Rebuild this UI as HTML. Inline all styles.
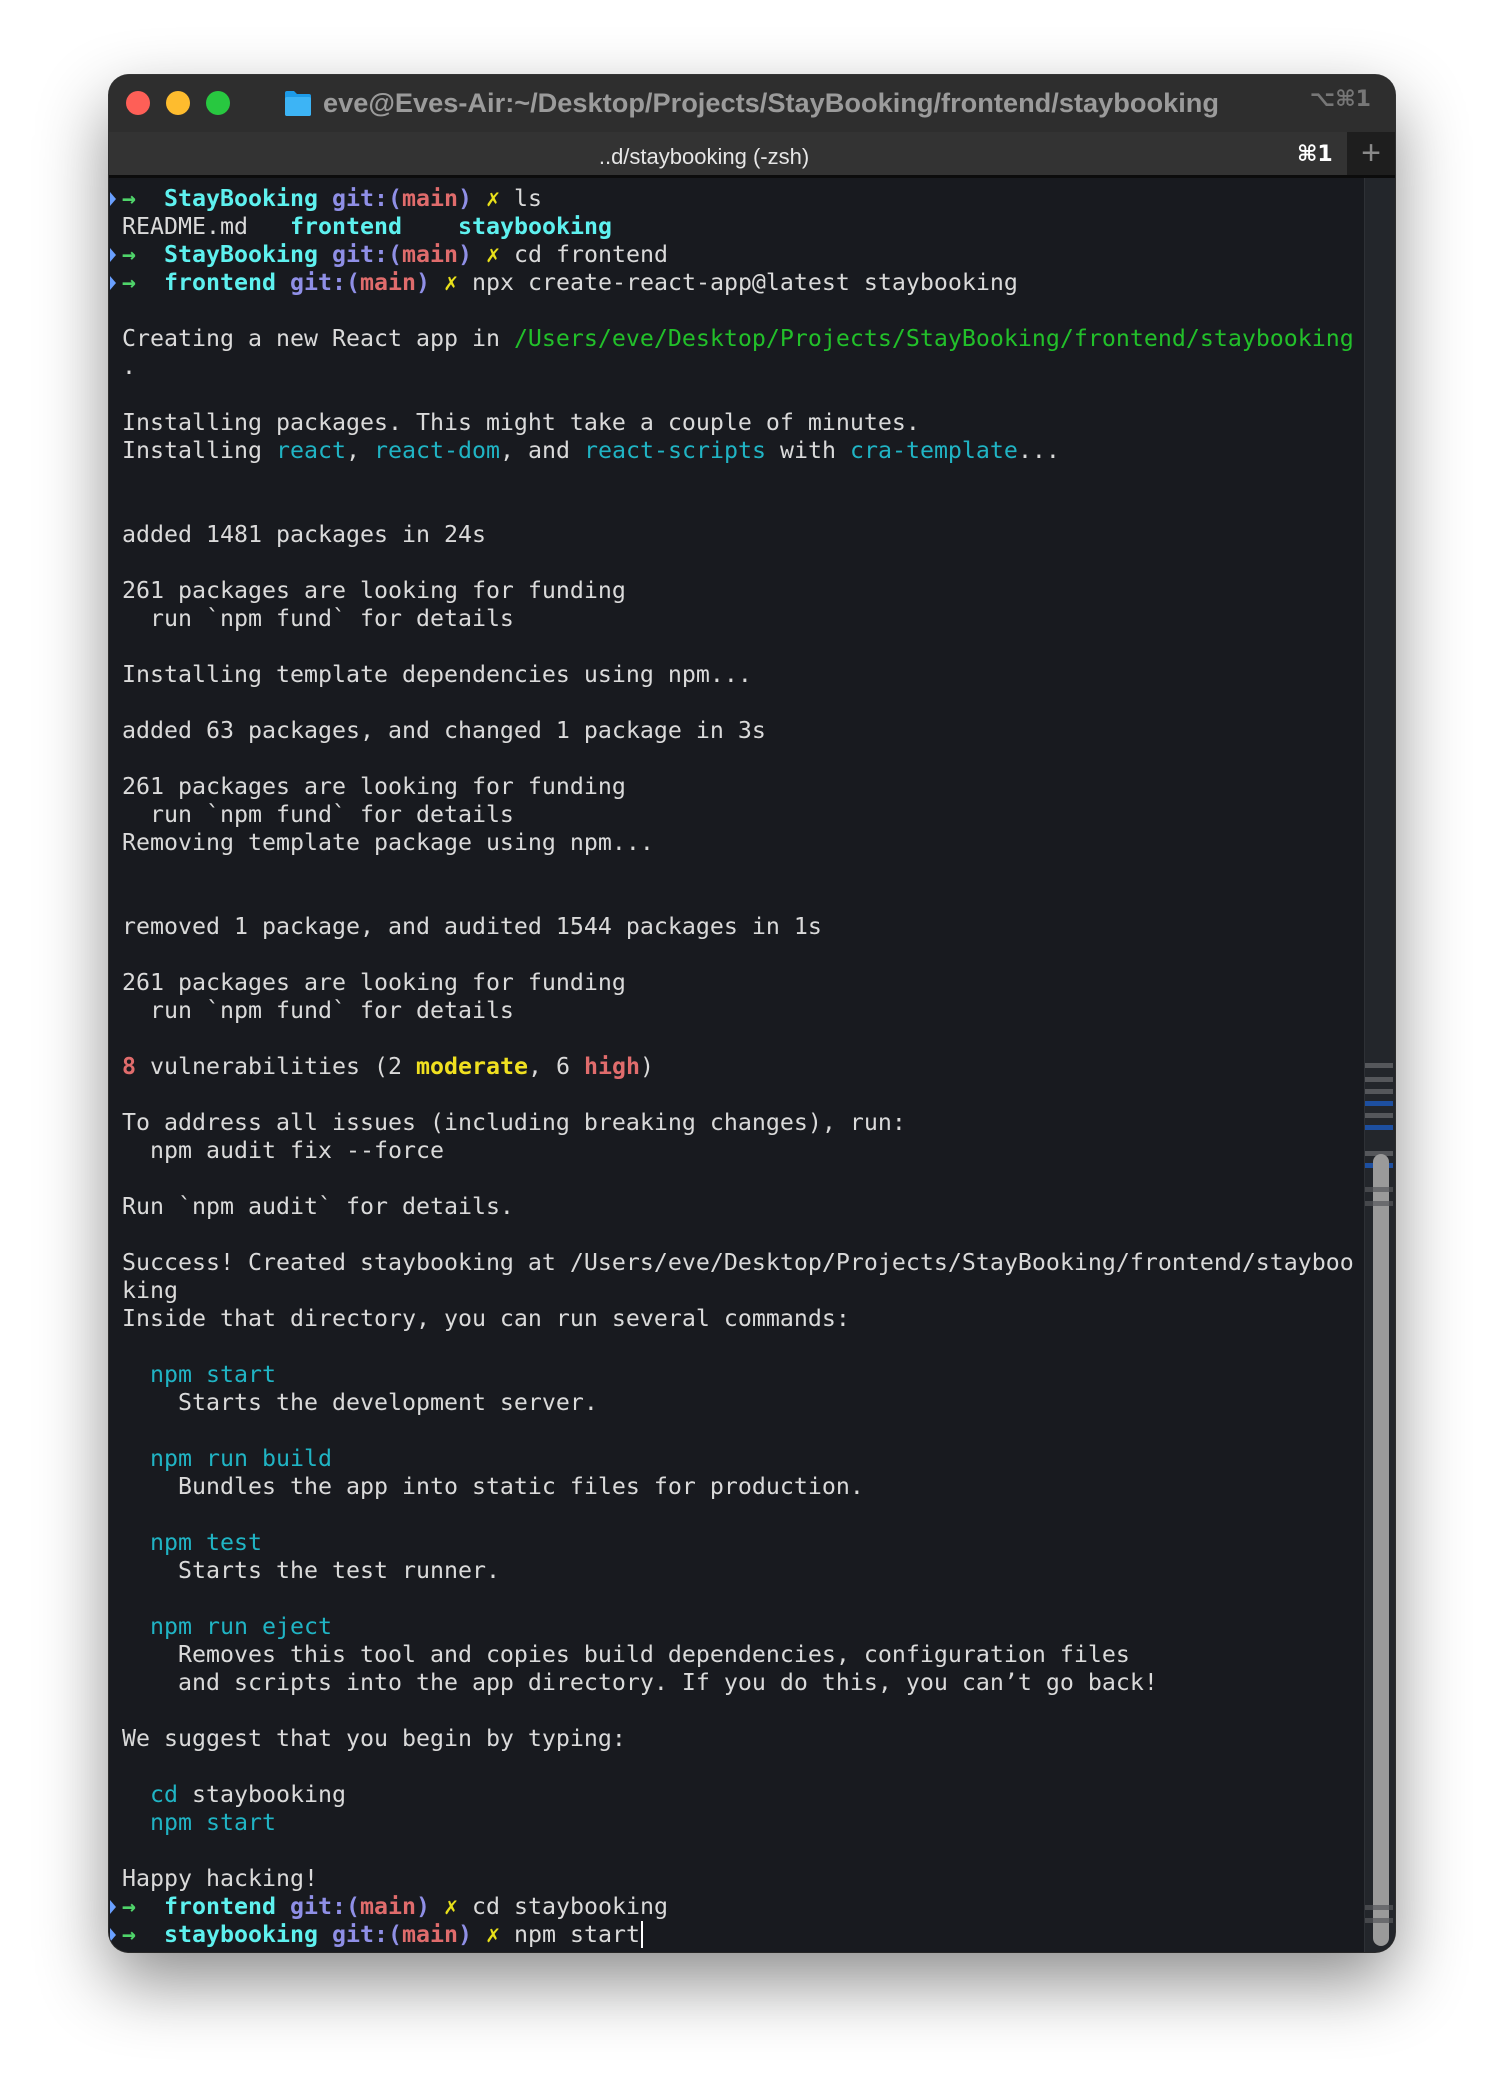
<!DOCTYPE html>
<html><head><meta charset="utf-8"><style>
html,body{margin:0;padding:0;width:1506px;height:2100px;background:#fff;overflow:hidden}
.win{position:absolute;left:109px;top:75px;width:1286px;height:1877px;border-radius:20px;background:#181a1f;box-shadow:0 30px 70px rgba(0,0,0,.45),0 0 0 1px #3a3a3a;overflow:hidden}
.title{position:absolute;left:0;top:0;width:100%;height:57px;background:#2e2e2e}
.tabs{position:absolute;left:0;top:57px;width:100%;height:46px;background:#333333;border-bottom:3px solid #0c0c0c;box-sizing:border-box}
.dot{position:absolute;top:16px;width:24px;height:24px;border-radius:50%}
.ttl{position:absolute;left:214px;top:12px;font:bold 27.2px "Liberation Sans",sans-serif;color:#9b9b9b;white-space:nowrap}
.sc{position:absolute;right:24px;top:12px;font:bold 22px "DejaVu Sans",sans-serif;color:#777}
.tabt{position:absolute;left:0;width:1190px;text-align:center;top:12px;font:22px "Liberation Sans",sans-serif;color:#e6e6e6}
.plus{position:absolute;right:0;top:0;width:48px;height:43px;background:#1e1e1e;color:#8a8a8a;font:34px "Liberation Sans",sans-serif;text-align:center;line-height:42px}
pre{position:absolute;left:13px;top:110px;margin:0;font:23.25px/28px "DejaVu Sans Mono",monospace;color:#dadada}
.c{color:#5ef1ef;font-weight:bold}.g{color:#8f8fe6;font-weight:bold}.r{color:#e06c6c;font-weight:bold}.y{color:#e8e01a}.a{color:#4fd46a;font-weight:bold}
.p{color:#22c02a}.t{color:#20b4c4}.rb{color:#e06c6c;font-weight:bold}.yb{color:#f0e020;font-weight:bold}
.sb{position:absolute;left:1255px;top:103px;width:31px;height:1774px;background:#23262b;border-left:1px solid #2e3136}
.m{position:absolute;left:0;width:28px;height:5px;background:#55575b}
.m.b{background:#1d4fa0}
.th{position:absolute;left:8px;top:976px;width:16px;height:792px;border-radius:8px;background:#9a9a9a}
.mk{position:absolute;left:1px;width:0;height:0;border-top:7px solid transparent;border-bottom:7px solid transparent;border-left:6px solid #6aa0ff}
</style></head><body>
<div class="win">
<div class="title">
<div class="dot" style="left:17px;background:#fe5f57"></div>
<div class="dot" style="left:57px;background:#febc2e"></div>
<div class="dot" style="left:97px;background:#28c840"></div>
<svg style="position:absolute;left:175px;top:15px" width="28" height="27" viewBox="0 0 28 27"><path d="M1 3a2 2 0 0 1 2-2h7l3 3h12a2 2 0 0 1 2 2v18a2 2 0 0 1-2 2H3a2 2 0 0 1-2-2z" fill="#1d9be8"/><rect x="1" y="7" width="26" height="19" rx="2" fill="#3db4f5"/></svg>
<div class="ttl">eve@Eves-Air:~/Desktop/Projects/StayBooking/frontend/staybooking</div>
<div class="sc">⌥⌘1</div>
</div>
<div class="tabs">
<div class="tabt">..d/staybooking (-zsh)</div>
<div style="position:absolute;left:1188px;top:10px;font:bold 22px 'DejaVu Sans',sans-serif;color:#fff">⌘1</div>
<div class="plus">+</div>
</div>
<div class="mk" style="top:117px"></div><div class="mk" style="top:173px"></div><div class="mk" style="top:201px"></div><div class="mk" style="top:1825px"></div><div class="mk" style="top:1853px"></div>
<pre><span class="a">→</span>  <span class="c">StayBooking</span> <span class="g">git:(</span><span class="r">main</span><span class="g">)</span> <span class="y">✗</span> ls
README.md   <span class="c">frontend</span>    <span class="c">staybooking</span>
<span class="a">→</span>  <span class="c">StayBooking</span> <span class="g">git:(</span><span class="r">main</span><span class="g">)</span> <span class="y">✗</span> cd frontend
<span class="a">→</span>  <span class="c">frontend</span> <span class="g">git:(</span><span class="r">main</span><span class="g">)</span> <span class="y">✗</span> npx create-react-app@latest staybooking

Creating a new React app in <span class="p">/Users/eve/Desktop/Projects/StayBooking/frontend/staybooking</span>
.

Installing packages. This might take a couple of minutes.
Installing <span class="t">react</span>, <span class="t">react-dom</span>, and <span class="t">react-scripts</span> with <span class="t">cra-template</span>...


added 1481 packages in 24s

261 packages are looking for funding
  run `npm fund` for details

Installing template dependencies using npm...

added 63 packages, and changed 1 package in 3s

261 packages are looking for funding
  run `npm fund` for details
Removing template package using npm...


removed 1 package, and audited 1544 packages in 1s

261 packages are looking for funding
  run `npm fund` for details

<span class="rb">8</span> vulnerabilities (2 <span class="yb">moderate</span>, 6 <span class="rb">high</span>)

To address all issues (including breaking changes), run:
  npm audit fix --force

Run `npm audit` for details.

Success! Created staybooking at /Users/eve/Desktop/Projects/StayBooking/frontend/stayboo
king
Inside that directory, you can run several commands:

  <span class="t">npm start</span>
    Starts the development server.

  <span class="t">npm run build</span>
    Bundles the app into static files for production.

  <span class="t">npm test</span>
    Starts the test runner.

  <span class="t">npm run eject</span>
    Removes this tool and copies build dependencies, configuration files
    and scripts into the app directory. If you do this, you can’t go back!

We suggest that you begin by typing:

  <span class="t">cd</span> staybooking
  <span class="t">npm start</span>

Happy hacking!
<span class="a">→</span>  <span class="c">frontend</span> <span class="g">git:(</span><span class="r">main</span><span class="g">)</span> <span class="y">✗</span> cd staybooking
<span class="a">→</span>  <span class="c">staybooking</span> <span class="g">git:(</span><span class="r">main</span><span class="g">)</span> <span class="y">✗</span> npm start<span style="border-left:2px solid #fff;margin-left:1px"></span></pre>
<div class="sb">
<div class="m" style="top:885px"></div><div class="m" style="top:899px"></div><div class="m" style="top:911px"></div><div class="m b" style="top:923px"></div><div class="m" style="top:935px"></div><div class="m b" style="top:947px"></div><div class="m" style="top:973px"></div><div class="m b" style="top:985px"></div>
<div class="th"></div>
<div class="m" style="top:1009px;opacity:.7"></div><div class="m" style="top:1023px;opacity:.7"></div>
<div class="m" style="top:1727px;opacity:.7"></div><div class="m" style="top:1740px;opacity:.7"></div>
</div>
</div>
</body></html>
